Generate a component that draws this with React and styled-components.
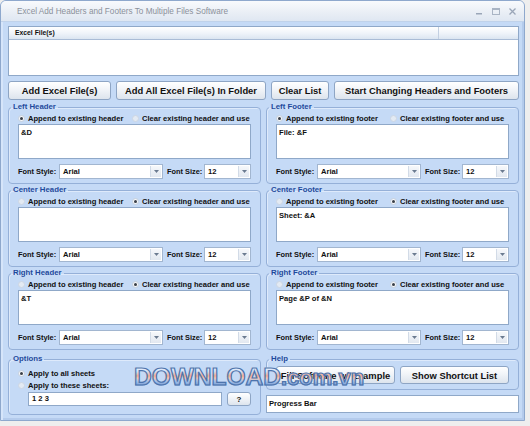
import React from 'react';
import styled, { createGlobalStyle } from 'styled-components';

const Global = createGlobalStyle`
  html, body { margin: 0; padding: 0; background: #ededed; }
  body { font-family: "Liberation Sans", Arial, sans-serif; }
  * { box-sizing: border-box; }
`;

const Screen = styled.div`
  position: relative;
  width: 530px;
  height: 426px;
  overflow: hidden;
  background: #eeeeee;
`;

const Window = styled.div`
  width: 525px;
  height: 421px;
  display: flex;
  flex-direction: column;
  background: #c5daf6;
  border: 1px solid #8ea8cd;
  border-radius: 6px 6px 0 0;
  box-shadow: inset 2px 0 0 #d6e5fa, inset -2px 0 0 #b4cbec, inset 0 -2px 0 #b4cbec;
`;

const TitleBar = styled.div`
  height: 21px;
  flex: none;
  display: flex;
  align-items: center;
  padding: 0 8px 0 16px;
  background: linear-gradient(#f8fafd, #e9eef5 60%, #dfe7f2);
  border-bottom: 1px solid #c0d2ea;
  border-radius: 5px 5px 0 0;
`;

const TitleText = styled.span`
  flex: 1;
  font-size: 8.2px;
  color: #8b919b;
  white-space: nowrap;
`;

const Controls = styled.div`
  display: flex;
  align-items: center;
  gap: 9px;
  color: #9ba6b6;
`;

const Body = styled.div`
  flex: 1;
  padding: 4px 5px 0 7px;
  display: flex;
  flex-direction: column;
`;

const ListBox = styled.div`
  height: 50px;
  background: #fff;
  border: 1px solid #8fa8c8;
`;

const ListHeader = styled.div`
  height: 13px;
  display: grid;
  grid-template-columns: 430px 1fr;
  background: linear-gradient(#ffffff, #eef3f9 55%, #dbe5f1);
  border-bottom: 1px solid #a9bcd6;
`;

const HeaderCell = styled.div`
  font-size: 6.8px;
  font-weight: bold;
  line-height: 12px;
  padding-left: 6px;
  color: #111;
  border-right: 1px solid #c3d0e2;
`;

const ButtonRow = styled.div`
  display: flex;
  gap: 5px;
  margin-top: 5px;
  height: 19px;
`;

const Button = styled.button`
  width: ${p => p.$w}px;
  height: ${p => p.$h || 19}px;
  flex: none;
  padding: 0;
  border: 1px solid #8ea5c4;
  border-radius: 3px;
  background: linear-gradient(#ffffff, #f1f4f8 45%, #dde4ed);
  font-family: "Liberation Sans", Arial, sans-serif;
  font-weight: bold;
  font-size: ${p => p.$fs || 9.4}px;
  color: #111;
  white-space: nowrap;
`;

const Grid = styled.div`
  display: grid;
  grid-template-columns: 253px 253px;
  column-gap: 5px;
  row-gap: 1px;
  margin-top: 2px;
  align-items: start;
`;

const Group = styled.fieldset`
  margin: 0;
  min-width: 0;
  padding: ${p => p.$pt || 0}px 9px ${p => p.$pb || 4}px 9px;
  border: 1px solid #95b0d8;
  border-radius: 4px;
  box-shadow: inset 1px 1px 0 #deeafb;
  ${p => p.$mt ? `margin-top: ${p.$mt}px;` : ''}
`;

const Legend = styled.legend`
  margin-left: -7px;
  padding: 0 2px;
  font-size: 7.8px;
  line-height: 10px;
  font-weight: bold;
  color: #1f4a9c;
`;

const RadioRow = styled.div`
  display: grid;
  grid-template-columns: 114px 1fr;
  height: 12px;
  align-items: center;
`;

const RadioItem = styled.label`
  display: flex;
  align-items: center;
  gap: 3px;
  font-size: 7.6px;
  font-weight: bold;
  color: #111;
  white-space: nowrap;
  height: 12px;
`;

const Circle = styled.span`
  width: 7px;
  height: 7px;
  flex: none;
  border-radius: 50%;
  background: ${p => (p.$checked ? '#f4f7fb' : '#e3eaf3')};
  border: 1px solid ${p => (p.$checked ? '#c4cfdc' : '#ccd6e3')};
  display: flex;
  align-items: center;
  justify-content: center;
  &::after {
    content: '';
    width: 3px;
    height: 3px;
    border-radius: 50%;
    background: ${p => (p.$checked ? '#3a3f48' : 'transparent')};
  }
`;

const TextBox = styled.div`
  height: 35px;
  background: #fff;
  border: 1px solid #8fa8c8;
  padding: 3px 2px;
  font-size: 7.6px;
  font-weight: bold;
  color: #111;
  line-height: 9px;
`;

const FontRow = styled.div`
  display: grid;
  grid-template-columns: 41px 104px 4px 37px 47px;
  height: 15px;
  margin-top: 5px;
  align-items: center;
`;

const FieldLabel = styled.span`
  font-size: 7.4px;
  font-weight: bold;
  color: #111;
  white-space: nowrap;
  grid-column: ${p => p.$col};
`;

const Select = styled.div`
  grid-column: ${p => p.$col};
  height: 15px;
  display: flex;
  background: #fff;
  border: 1px solid #a2b6d0;
`;

const SelectValue = styled.span`
  flex: 1;
  padding-left: 3px;
  font-size: 7.6px;
  font-weight: bold;
  line-height: 13px;
  color: #111;
`;

const SelectArrow = styled.span`
  width: 11px;
  margin: 1px;
  background: linear-gradient(#f6f8fb, #e2e8f0);
  border-left: 1px solid #d2dbe7;
  display: flex;
  align-items: center;
  justify-content: center;
`;

const OptionsBody = styled.div`
  padding-top: 3px;
`;

const SheetRow = styled.div`
  display: flex;
  gap: 5px;
  margin-top: 1px;
  padding-left: 10px;
`;

const SheetInput = styled.div`
  width: 194px;
  height: 14px;
  background: #fff;
  border: 1px solid #8fa8c8;
  padding-left: 3px;
  font-size: 7.6px;
  font-weight: bold;
  line-height: 12px;
  color: #111;
`;

const Stack = styled.div`
  display: flex;
  flex-direction: column;
  margin-top: 3px;
`;

const HelpRow = styled.div`
  display: flex;
  gap: 5px;
  padding-top: 2px;
`;

const Progress = styled.div`
  margin-top: 5px;
  height: 18px;
  background: #fff;
  border: 1px solid #8fa8c8;
  padding-left: 2px;
  font-size: 7.6px;
  font-weight: bold;
  line-height: 16px;
  color: #111;
`;

const Watermark = styled.div`
  position: absolute;
  left: 134px;
  top: 364px;
  font-family: "Liberation Sans", Arial, sans-serif;
  font-weight: bold;
  font-size: 24.5px;
  line-height: 25px;
  white-space: nowrap;
  pointer-events: none;
  background: linear-gradient(#ffffff 0%, #d4e2f7 28%, #f2a98e 46%, #f6c8b4 54%, #a9c3ea 66%, #3f6fb8 100%);
  -webkit-background-clip: text;
  background-clip: text;
  color: transparent;
  -webkit-text-stroke: 1.2px #4d74ad;
`;

const Small = styled.span`
  font-size: 22px;
`;

function Radio({ checked, children }) {
  return (
    <RadioItem>
      <Circle $checked={checked} />
      {children}
    </RadioItem>
  );
}

function Arrow() {
  return (
    <svg width="5" height="3" viewBox="0 0 5 3">
      <path d="M0 0 L5 0 L2.5 3 Z" fill="#6b7b90" />
    </svg>
  );
}

function HFGroup({ title, kind, mode, text }) {
  return (
    <Group>
      <Legend>{title}</Legend>
      <RadioRow>
        <Radio checked={mode === 0}>Append to existing {kind}</Radio>
        <Radio checked={mode === 1}>Clear existing {kind} and use</Radio>
      </RadioRow>
      <TextBox>{text}</TextBox>
      <FontRow>
        <FieldLabel $col={1}>Font Style:</FieldLabel>
        <Select $col={2}>
          <SelectValue>Arial</SelectValue>
          <SelectArrow><Arrow /></SelectArrow>
        </Select>
        <FieldLabel $col={4}>Font Size:</FieldLabel>
        <Select $col={5}>
          <SelectValue>12</SelectValue>
          <SelectArrow><Arrow /></SelectArrow>
        </Select>
      </FontRow>
    </Group>
  );
}

const sections = [
  { title: 'Left Header', kind: 'header', mode: 0, text: '&D' },
  { title: 'Left Footer', kind: 'footer', mode: 0, text: 'File: &F' },
  { title: 'Center Header', kind: 'header', mode: 1, text: '' },
  { title: 'Center Footer', kind: 'footer', mode: 1, text: 'Sheet: &A' },
  { title: 'Right Header', kind: 'header', mode: 1, text: '&T' },
  { title: 'Right Footer', kind: 'footer', mode: 1, text: 'Page &P of &N' },
];

export default function App() {
  return (
    <Screen>
      <Global />
      <Window>
        <TitleBar>
          <TitleText>Excel Add Headers and Footers To Multiple Files Software</TitleText>
          <Controls>
            <svg width="7" height="7" viewBox="0 0 7 7"><rect x="0" y="5" width="6" height="1.5" fill="#9aa6b8" /></svg>
            <svg width="8" height="7" viewBox="0 0 8 7"><rect x="0.5" y="0.5" width="7" height="6" fill="none" stroke="#a9b4c4" /><rect x="0.5" y="0.5" width="7" height="1.5" fill="#a9b4c4" /></svg>
            <svg width="7" height="7" viewBox="0 0 7 7"><path d="M0.5 0.5 L6.5 6.5 M6.5 0.5 L0.5 6.5" stroke="#9aa6b8" strokeWidth="1.3" /></svg>
          </Controls>
        </TitleBar>
        <Body>
          <ListBox>
            <ListHeader>
              <HeaderCell>Excel File(s)</HeaderCell>
              <div />
            </ListHeader>
          </ListBox>
          <ButtonRow>
            <Button $w={103}>Add Excel File(s)</Button>
            <Button $w={150}>Add All Excel File(s) In Folder</Button>
            <Button $w={58}>Clear List</Button>
            <Button $w={185}>Start Changing Headers and Footers</Button>
          </ButtonRow>
          <Grid>
            {sections.map(s => (
              <HFGroup key={s.title} {...s} />
            ))}
            <Group $mt={3} $pb={8}>
              <Legend>Options</Legend>
              <OptionsBody>
                <Radio checked>Apply to all sheets</Radio>
                <Radio>Apply to these sheets:</Radio>
                <SheetRow>
                  <SheetInput>1 2 3</SheetInput>
                  <Button $w={24} $h={14} $fs={8}>?</Button>
                </SheetRow>
              </OptionsBody>
            </Group>
            <Stack>
              <Group $pb={5}>
                <Legend>Help</Legend>
                <HelpRow>
                  <Button $w={119} $h={18}>Fill Software w/ Example</Button>
                  <Button $w={109} $h={18}>Show Shortcut List</Button>
                </HelpRow>
              </Group>
              <Progress>Progress Bar</Progress>
            </Stack>
          </Grid>
        </Body>
      </Window>
      <Watermark>
        DOWNLOAD<Small>.com.vn</Small>
      </Watermark>
    </Screen>
  );
}
